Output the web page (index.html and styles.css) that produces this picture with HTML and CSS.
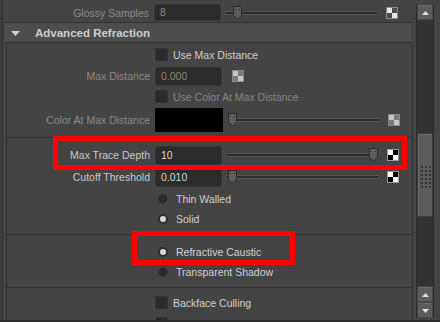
FILE: index.html
```html
<!DOCTYPE html>
<html>
<head>
<meta charset="utf-8">
<link rel="stylesheet" href="styles.css">
</head>
<body>
<div class="app">
  <div class="gutter"></div>
  <div class="main">
    <div class="row row-top">
      <span class="lbl lbl-top dim">Glossy Samples</span>
      <div class="field field-top dim">8</div>
      <div class="slider"><div class="track"></div><svg class="thumb" style="left:8px" width="11" height="15" viewBox="0 0 11 15"><path d="M1.5 1.5h8v9l-4 3.5l-4-3.5z" fill="#5d5d5d" stroke="#2b2b2b"/><rect x="3" y="4" width="1" height="1" fill="#2b2b2b"/><rect x="7" y="4" width="1" height="1" fill="#2b2b2b"/></svg></div>
      <svg class="checker" width="12" height="12" viewBox="0 0 12 12"><rect width="12" height="12" fill="#8a8a8a"/><rect x="1" y="1" width="5" height="5" fill="#e8e8e8"/><rect x="6" y="1" width="5" height="5" fill="#4a4a4a"/><rect x="1" y="6" width="5" height="5" fill="#4a4a4a"/><rect x="6" y="6" width="5" height="5" fill="#e8e8e8"/></svg>
    </div>
    <div class="header">
      <svg class="tri" width="9" height="5" viewBox="0 0 9 5"><path d="M0 0h9l-4.5 5z" fill="#d0d0d0"/></svg>
      <span class="htext">Advanced Refraction</span>
    </div>
    <div class="section">
      <div class="row h21">
        <span class="lbl"></span>
        <span class="cb"></span><span class="cbtext">Use Max Distance</span>
      </div>
      <div class="row h22">
        <span class="lbl dim">Max Distance</span>
        <div class="field dim">0.000</div>
        <svg class="checker small" width="12" height="12" viewBox="0 0 12 12"><rect width="12" height="12" fill="#8a8a8a"/><rect x="1" y="1" width="5" height="5" fill="#c4c4c4"/><rect x="6" y="1" width="5" height="5" fill="#7a7a7a"/><rect x="1" y="6" width="5" height="5" fill="#7a7a7a"/><rect x="6" y="6" width="5" height="5" fill="#c4c4c4"/></svg>
      </div>
      <div class="row h19">
        <span class="lbl"></span>
        <span class="cb"></span><span class="cbtext dim">Use Color At Max Distance</span>
      </div>
      <div class="row h28">
        <span class="lbl dim">Color At Max Distance</span>
        <div class="swatch"></div>
        <div class="slider"><div class="track"></div><svg class="thumb" style="left:1px" width="11" height="15" viewBox="0 0 11 15"><path d="M1.5 1.5h8v9l-4 3.5l-4-3.5z" fill="#5d5d5d" stroke="#2b2b2b"/><rect x="3" y="4" width="1" height="1" fill="#2b2b2b"/><rect x="7" y="4" width="1" height="1" fill="#2b2b2b"/></svg></div>
        <svg class="checker" width="12" height="12" viewBox="0 0 12 12"><rect width="12" height="12" fill="#8a8a8a"/><rect x="1" y="1" width="5" height="5" fill="#c4c4c4"/><rect x="6" y="1" width="5" height="5" fill="#7a7a7a"/><rect x="1" y="6" width="5" height="5" fill="#7a7a7a"/><rect x="6" y="6" width="5" height="5" fill="#c4c4c4"/></svg>
      </div>
      <div class="sep sep1"></div>
      <div class="row h22 first">
        <span class="lbl">Max Trace Depth</span>
        <div class="field">10</div>
        <div class="slider"><div class="track"></div><svg class="thumb" style="left:143px" width="11" height="15" viewBox="0 0 11 15"><path d="M1.5 1.5h8v9l-4 3.5l-4-3.5z" fill="#5d5d5d" stroke="#2b2b2b"/><rect x="3" y="4" width="1" height="1" fill="#2b2b2b"/><rect x="7" y="4" width="1" height="1" fill="#2b2b2b"/></svg></div>
        <svg class="checker" width="12" height="12" viewBox="0 0 12 12"><rect width="12" height="12" fill="#9a9a9a"/><rect x="1" y="1" width="5" height="5" fill="#ffffff"/><rect x="6" y="1" width="5" height="5" fill="#000000"/><rect x="1" y="6" width="5" height="5" fill="#000000"/><rect x="6" y="6" width="5" height="5" fill="#ffffff"/></svg>
      </div>
      <div class="row h22">
        <span class="lbl">Cutoff Threshold</span>
        <div class="field">0.010</div>
        <div class="slider"><div class="track"></div><svg class="thumb" style="left:2px" width="11" height="15" viewBox="0 0 11 15"><path d="M1.5 1.5h8v9l-4 3.5l-4-3.5z" fill="#5d5d5d" stroke="#2b2b2b"/><rect x="3" y="4" width="1" height="1" fill="#2b2b2b"/><rect x="7" y="4" width="1" height="1" fill="#2b2b2b"/></svg></div>
        <svg class="checker" width="12" height="12" viewBox="0 0 12 12"><rect width="12" height="12" fill="#9a9a9a"/><rect x="1" y="1" width="5" height="5" fill="#ffffff"/><rect x="6" y="1" width="5" height="5" fill="#000000"/><rect x="1" y="6" width="5" height="5" fill="#000000"/><rect x="6" y="6" width="5" height="5" fill="#ffffff"/></svg>
      </div>
      <div class="row h21">
        <span class="lbl"></span>
        <span class="radio"></span><span class="rtext">Thin Walled</span>
      </div>
      <div class="row h19">
        <span class="lbl"></span>
        <span class="radio on"></span><span class="rtext">Solid</span>
      </div>
      <div class="sep sep2"></div>
      <div class="row h20 first2">
        <span class="lbl"></span>
        <span class="radio on"></span><span class="rtext">Refractive Caustic</span>
      </div>
      <div class="row h20">
        <span class="lbl"></span>
        <span class="radio"></span><span class="rtext">Transparent Shadow</span>
      </div>
      <div class="sep sep3"></div>
      <div class="row h21 first3">
        <span class="lbl"></span>
        <span class="cb"></span><span class="cbtext">Backface Culling</span>
      </div>
      <div class="row h21">
        <span class="lbl"></span>
        <span class="cb"></span><span class="cbtext">Transparency Shadows</span>
      </div>
    </div>
  </div>
  <div class="scrollcol">
    <div class="scrollbar">
      <div class="sbtn"><svg width="7" height="4" viewBox="0 0 7 4"><path d="M0 4h7l-3.5-4z" fill="#e0e0e0"/></svg></div>
      <div class="strack">
        <div class="sthumb">
          <div class="grip">
            <i></i><i></i><i></i><i></i><i></i><i></i><i></i><i></i><i></i>
            <i></i><i></i><i></i><i></i><i></i><i></i><i></i><i></i><i></i>
          </div>
        </div>
      </div>
      <div class="sbtn"><svg width="7" height="4" viewBox="0 0 7 4"><path d="M0 4h7l-3.5-4z" fill="#e0e0e0"/></svg></div>
      <div class="sbtn"><svg width="7" height="4" viewBox="0 0 7 4"><path d="M0 0h7l-3.5 4z" fill="#e0e0e0"/></svg></div>
    </div>
  </div>
  <div class="mark mark1"></div>
  <div class="mark mark2"></div>
</div>
</body>
</html>
```

FILE: styles.css
```css
* { box-sizing: border-box; }
html, body { margin: 0; padding: 0; }
body {
  background: #444444;
  font-family: "Liberation Sans", Arial, sans-serif;
  font-size: 10.5px;
  color: #c6c6c6;
}
.app {
  position: relative;
  width: 440px;
  height: 322px;
  display: flex;
  overflow: hidden;
  border-bottom: 2px solid #2c2c2c;
  background: #444444;
}
.gutter {
  width: 3px;
  flex: none;
  background: #3d3d3d;
  border-right: 1px solid #303030;
}
.main {
  width: 410px;
  flex: none;
  display: flex;
  flex-direction: column;
}
.row {
  display: flex;
  align-items: center;
  flex: none;
}
.row-top {
  height: 23px;
  border-bottom: 1px solid #333333;
  padding-top: 3px;
}
.h19 { height: 19px; }
.h20 { height: 20px; }
.h21 { height: 21px; }
.h22 { height: 22px; }
.h28 { height: 28px; }
.lbl {
  width: 143px;
  flex: none;
  text-align: right;
  margin-right: 5px;
  white-space: nowrap;
  color: #c8c8c8;
}
.lbl-top { width: 146px; }
.dim { color: #8a8a8a; }
.field {
  width: 67px;
  height: 19px;
  flex: none;
  background: #2b2b2b;
  border: 1px solid #363636;
  border-radius: 3px;
  padding-left: 5px;
  line-height: 17px;
  color: #d6d6d6;
}
.field-top { height: 17px; line-height: 15px; }
.field.dim { color: #8a8a8a; }
.swatch {
  width: 68px;
  height: 24px;
  flex: none;
  background: #000000;
}
.slider {
  position: relative;
  width: 155px;
  height: 16px;
  flex: none;
  margin-left: 3px;
  display: flex;
  align-items: center;
}
.track {
  width: 100%;
  height: 4px;
  background: #2d2d2d;
  border: 1px solid #565656;
  border-radius: 2px;
}
.thumb {
  position: absolute;
  top: 0;
}
.checker {
  flex: none;
  margin-left: 7px;
}
.checker.small { margin-left: 10px; }
.cb {
  width: 13px;
  height: 13px;
  flex: none;
  background: #2b2b2b;
  border: 1px solid #323232;
  border-radius: 2px;
}
.cbtext { margin-left: 5px; color: #d0d0d0; white-space: nowrap; }
.cbtext.dim { color: #858585; }
.radio {
  width: 10px;
  height: 10px;
  flex: none;
  border-radius: 50%;
  background: #2a2a2a;
  margin-left: 3px;
  border: 1px solid #383838;
}
.radio.on {
  background: #d8d8d8;
  border: 2px solid #2e2e2e;
}
.rtext { margin-left: 8px; color: #d0d0d0; white-space: nowrap; }
.header {
  height: 20px;
  margin-left: 2px;
  width: 406px;
  background: #4d4d4d;
  border-bottom: 1px solid #2f2f2f;
  display: flex;
  align-items: center;
  flex: none;
}
.tri { margin-left: 6px; margin-top: 1px; }
.htext {
  margin-left: 15px;
  font-weight: bold;
  font-size: 11.5px;
  color: #cdcdcd;
}
.section {
  margin-left: 3px;
  width: 407px;
  flex: 1;
  border-left: 1px solid #303030;
  border-right: 1px solid #303030;
  padding-top: 1px;
  display: flex;
  flex-direction: column;
}
.sep {
  flex: none;
  height: 1px;
  background: #323232;
}
.sep1 { margin-top: 3px; }
.sep2 { margin-top: 6px; }
.sep3 { margin-top: 5px; }
.first { margin-top: 6px; }
.first2 { margin-top: 7px; }
.first3 { margin-top: 4px; }
.scrollcol {
  width: 27px;
  flex: none;
  padding: 4px 6px 2px 3px;
  display: flex;
}
.scrollbar {
  width: 18px;
  flex: none;
  border-left: 1px solid #2c2c2c;
  border-right: 1px solid #2c2c2c;
  display: flex;
  flex-direction: column;
  gap: 1px;
  padding-top: 1px;
}
.sbtn {
  height: 15px;
  flex: none;
  background: #5c5c5c;
  border: 1px solid #4a4a4a;
  border-top-color: #6a6a6a;
  border-radius: 2px;
  display: flex;
  align-items: center;
  justify-content: center;
}
.strack {
  flex: 1;
  margin-top: -1px;
  background: repeating-conic-gradient(#2a2a2a 0 25%, #3b3b3b 0 50%) 0 0 / 2px 2px;
  display: flex;
  flex-direction: column;
}
.sthumb {
  margin-top: 113px;
  height: 84px;
  flex: none;
  background: #5b5b5b;
  border: 1px solid #3c3c3c;
  box-shadow: inset 1px 1px 0 #6a6a6a;
  display: flex;
  justify-content: center;
  padding-top: 32px;
}
.grip {
  display: grid;
  grid-template-columns: repeat(3, 2px);
  grid-auto-rows: 2px;
  column-gap: 2px;
  row-gap: 2px;
  height: 22px;
  margin-left: 1px;
}
.grip i { background: #353535; }
.mark {
  position: absolute;
  border: 5px solid #ff0000;
}
.mark1 { left: 53px; top: 136px; width: 354px; height: 34px; }
.mark2 { left: 132px; top: 231px; width: 163px; height: 34px; }
```
